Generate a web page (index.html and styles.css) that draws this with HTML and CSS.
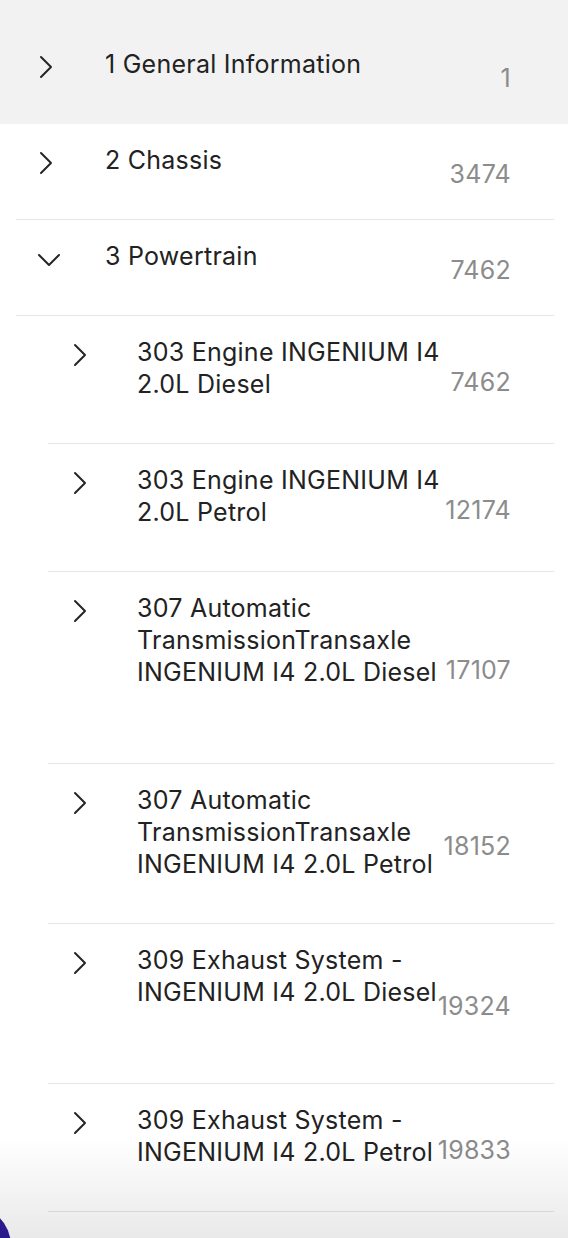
FILE: index.html
```html
<!DOCTYPE html>
<html lang="en">
<head>
  <meta charset="UTF-8" />
  <meta name="viewport" content="width=device-width, initial-scale=1" />
  <title>Contents</title>
  <link rel="stylesheet" href="styles.css">
</head>
<body>
  <div class="tree">
    <!-- Top level sections -->
    <div class="node node--active">
      <div class="node-inner">
        <span class="toggle">
          <svg viewBox="0 0 28 28" width="28" height="28"><path d="M9 4 L19 14 L9 24" /></svg>
        </span>
        <span class="title">1 General Information</span>
        <span class="count">1</span>
      </div>
    </div>

    <div class="node">
      <div class="node-inner">
        <span class="toggle">
          <svg viewBox="0 0 28 28" width="28" height="28"><path d="M9 4 L19 14 L9 24" /></svg>
        </span>
        <span class="title">2 Chassis</span>
        <span class="count">3474</span>
      </div>
    </div>

    <div class="node">
      <div class="node-inner">
        <span class="toggle">
          <svg viewBox="0 0 28 28" width="28" height="28"><path d="M7 10 L17 20 L27 10" /></svg>
        </span>
        <span class="title">3 Powertrain</span>
        <span class="count">7462</span>
      </div>
    </div>

    <!-- Children of 3 Powertrain -->
    <div class="node node--child">
      <div class="node-inner">
        <span class="toggle">
          <svg viewBox="0 0 28 28" width="28" height="28"><path d="M9 4 L19 14 L9 24" /></svg>
        </span>
        <span class="title">303 Engine INGENIUM I4<br>2.0L Diesel</span>
        <span class="count">7462</span>
      </div>
    </div>

    <div class="node node--child">
      <div class="node-inner">
        <span class="toggle">
          <svg viewBox="0 0 28 28" width="28" height="28"><path d="M9 4 L19 14 L9 24" /></svg>
        </span>
        <span class="title">303 Engine INGENIUM I4<br>2.0L Petrol</span>
        <span class="count">12174</span>
      </div>
    </div>

    <div class="node node--child">
      <div class="node-inner node-inner--extra">
        <span class="toggle">
          <svg viewBox="0 0 28 28" width="28" height="28"><path d="M9 4 L19 14 L9 24" /></svg>
        </span>
        <span class="title">307 Automatic<br>TransmissionTransaxle<br>INGENIUM I4 2.0L Diesel</span>
        <span class="count">17107</span>
      </div>
    </div>

    <div class="node node--child">
      <div class="node-inner">
        <span class="toggle">
          <svg viewBox="0 0 28 28" width="28" height="28"><path d="M9 4 L19 14 L9 24" /></svg>
        </span>
        <span class="title">307 Automatic<br>TransmissionTransaxle<br>INGENIUM I4 2.0L Petrol</span>
        <span class="count">18152</span>
      </div>
    </div>

    <div class="node node--child">
      <div class="node-inner node-inner--extra">
        <span class="toggle">
          <svg viewBox="0 0 28 28" width="28" height="28"><path d="M9 4 L19 14 L9 24" /></svg>
        </span>
        <span class="title">309 Exhaust System -<br>INGENIUM I4 2.0L Diesel</span>
        <span class="count">19324</span>
      </div>
    </div>

    <div class="node node--child">
      <div class="node-inner">
        <span class="toggle">
          <svg viewBox="0 0 28 28" width="28" height="28"><path d="M9 4 L19 14 L9 24" /></svg>
        </span>
        <span class="title">309 Exhaust System -<br>INGENIUM I4 2.0L Petrol</span>
        <span class="count">19833</span>
      </div>
    </div>

    <div class="node node--child">
      <div class="node-inner">
        <span class="toggle">
          <svg viewBox="0 0 28 28" width="28" height="28"><path d="M9 4 L19 14 L9 24" /></svg>
        </span>
        <span class="title">310 Fuel System -<br>INGENIUM I4 2.0L Diesel</span>
        <span class="count">20415</span>
      </div>
    </div>
  </div>

  <!-- Floating bottom shade and the edge of the action button -->
  <div class="bottom-shade"></div>
  <div class="fab-edge"></div>
</body>
</html>
```

FILE: styles.css
```css
/* Basic reset */
* {
  margin: 0;
  padding: 0;
  box-sizing: border-box;
}

html, body {
  height: 100%;
}

body {
  background-color: #fff;
  font-family: "Inter", "Noto Sans", sans-serif;
  color: #222;
  overflow: hidden;
}

/* Tree list */
.tree {
  display: flex;
  flex-direction: column;
}

.node--active {
  background-color: #f2f2f2;
  padding-top: 28px;
}

.node-inner {
  display: flex;
  align-items: flex-start;
  margin: 0 14px 0 16px;
  padding: 20px 43px 43px 0;
  border-bottom: 1px solid #e6e6e6;
}

.node--active .node-inner {
  border-bottom-color: transparent;
}

.node--child .node-inner {
  margin-left: 48px;
}

.node--child .toggle svg {
  margin-left: 18px;
}

/* rows that reserve an extra line below the title */
.node-inner--extra {
  padding-bottom: 75px;
}

/* Chevron */
.toggle {
  flex-shrink: 0;
  width: 89px;
  height: 32px;
  display: flex;
}

.toggle svg {
  margin-left: 16px;
  margin-top: 5px;
  overflow: visible;
}

.toggle path {
  fill: none;
  stroke: #262626;
  stroke-width: 2;
  stroke-linecap: round;
  stroke-linejoin: round;
}

/* Texts */
.title {
  flex: 1;
  min-width: 0;
  font-size: 25px;
  line-height: 32px;
  white-space: nowrap;
  letter-spacing: 0.25px;
}

/* centred on the whole row, padding included */
.count {
  flex-shrink: 0;
  align-self: center;
  margin-top: 14px;
  margin-bottom: -14px;
  font-size: 25px;
  line-height: 32px;
  letter-spacing: 0.25px;
  color: #8c8c8c;
  text-align: right;
}

.node-inner--extra .count {
  margin-top: 30px;
  margin-bottom: -30px;
}

/* Shade at the bottom of the screen */
.bottom-shade {
  position: fixed;
  left: 0;
  right: 0;
  bottom: 0;
  height: 100px;
  background: linear-gradient(to bottom, rgba(0, 0, 0, 0), rgba(0, 0, 0, 0.085));
  pointer-events: none;
}

.fab-edge {
  position: fixed;
  left: -71px;
  bottom: -49px;
  width: 82px;
  height: 82px;
  border-radius: 50%;
  background-color: #2b1a8c;
}
```
